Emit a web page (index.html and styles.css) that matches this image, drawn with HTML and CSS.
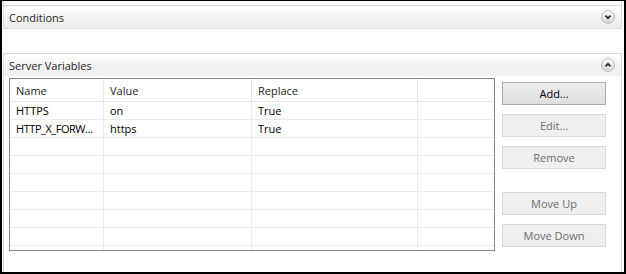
FILE: index.html
```html
<!DOCTYPE html>
<html lang="en">
<head>
  <meta charset="UTF-8">
  <title>Server Variables</title>
  <link rel="stylesheet" href="styles.css">
</head>
<body>
  <div class="frame">
    <div class="stub"></div>

    <section class="group">
      <div class="group-head">
        <span>Conditions</span>
        <svg class="toggle" width="14" height="14" viewBox="0 0 14 14">
          <defs>
            <linearGradient id="knobA" x1="0" y1="0" x2="0" y2="1">
              <stop offset="0" stop-color="#fefefe"/>
              <stop offset="1" stop-color="#d4d4d4"/>
            </linearGradient>
          </defs>
          <circle cx="7" cy="7" r="6.5" fill="url(#knobA)" stroke="#b8b8b8"/>
          <path d="M4.5 5.7 L7 8.2 L9.5 5.7" fill="none" stroke="#2d2d2d" stroke-width="1.7"/>
        </svg>
      </div>
    </section>

    <section class="group open">
      <div class="group-head">
        <span>Server Variables</span>
        <svg class="toggle" width="14" height="14" viewBox="0 0 14 14">
          <defs>
            <linearGradient id="knobB" x1="0" y1="0" x2="0" y2="1">
              <stop offset="0" stop-color="#fefefe"/>
              <stop offset="1" stop-color="#d4d4d4"/>
            </linearGradient>
          </defs>
          <circle cx="7" cy="7" r="6.5" fill="url(#knobB)" stroke="#b8b8b8"/>
          <path d="M4.5 8.3 L7 5.8 L9.5 8.3" fill="none" stroke="#2d2d2d" stroke-width="1.7"/>
        </svg>
      </div>

      <div class="group-body">
        <div class="listbox">
          <table>
            <thead>
              <tr>
                <th class="col-name">Name</th>
                <th class="col-value">Value</th>
                <th class="col-replace">Replace</th>
                <th></th>
              </tr>
            </thead>
            <tbody>
              <tr><td>HTTPS</td><td>on</td><td>True</td><td></td></tr>
              <tr><td class="clip">HTTP_X_FORW...</td><td>https</td><td>True</td><td></td></tr>
              <tr><td></td><td></td><td></td><td></td></tr>
              <tr><td></td><td></td><td></td><td></td></tr>
              <tr><td></td><td></td><td></td><td></td></tr>
              <tr><td></td><td></td><td></td><td></td></tr>
              <tr><td></td><td></td><td></td><td></td></tr>
              <tr><td></td><td></td><td></td><td></td></tr>
              <tr><td></td><td></td><td></td><td></td></tr>
            </tbody>
          </table>
        </div>

        <div class="actions">
          <button class="btn">Add...</button>
          <button class="btn" disabled>Edit...</button>
          <button class="btn" disabled>Remove</button>
          <button class="btn spaced" disabled>Move Up</button>
          <button class="btn" disabled>Move Down</button>
        </div>
      </div>
    </section>
  </div>
</body>
</html>
```

FILE: styles.css
```css
body {
  margin: 0;
  font-family: "Open Sans", "Noto Sans", sans-serif;
  font-size: 11px;
  color: #1e1e1e;
  background-color: #fff;
}

.frame {
  width: 626px;
  height: 274px;
  box-sizing: border-box;
  border: 2px solid #000;
  border-top-width: 1px;
  padding: 0 2px 0 1px;
  overflow: hidden;
  background-color: #fff;
}

.stub {
  height: 4px;
  border-left: 1px solid #dadada;
  border-right: 1px solid #dadada;
}

.group {
  border: 1px solid #dadada;
  border-bottom: none;
}

.group + .group {
  margin-top: 24px;
}

.group-head {
  height: 22px;
  display: flex;
  align-items: center;
  justify-content: space-between;
  padding: 0 6px 0 5px;
  background: linear-gradient(to bottom, #ffffff, #f6f6f6 40%, #ececec);
  border-bottom: 1px solid #dadada;
}

.open .group-head {
  border-bottom: none;
  background: linear-gradient(to bottom, #ffffff, #f5f5f5 40%, #f0f0f0);
}

.open {
  height: 220px;
}

.toggle {
  display: block;
}

.group-body {
  display: flex;
  align-items: flex-start;
  padding: 2px 0 0 5px;
}

.listbox {
  width: 486px;
  height: 173px;
  box-sizing: border-box;
  border: 1px solid #828790;
  overflow: hidden;
}

table {
  width: 100%;
  table-layout: fixed;
  border-collapse: collapse;
}

th, td {
  padding: 0 6px;
  text-align: left;
  font-weight: normal;
  white-space: nowrap;
  overflow: hidden;
  border-right: 1px solid #ececec;
  border-bottom: 1px solid #ececec;
}

th {
  height: 22px;
  border-right-color: #e6e6e6;
  border-bottom-color: #e6e6e6;
}

td {
  height: 17px;
  color: #000;
}

td.clip {
  padding-right: 0;
  letter-spacing: -0.45px;
}

th:last-child, td:last-child {
  border-right: none;
}

.col-name { width: 81px; }
.col-value { width: 135px; }
.col-replace { width: 153px; }

.actions {
  display: flex;
  flex-direction: column;
  gap: 9px;
  margin: 4px 0 0 7px;
}

.btn {
  width: 104px;
  height: 23px;
  padding: 0;
  font-family: inherit;
  font-size: 11px;
  color: #000;
  border: 1px solid #acacac;
  background: linear-gradient(to bottom, #ececec, #dfdfdf);
}

.btn:disabled {
  color: #6d6d6d;
  border-color: #d9d9d9;
  background: #efefef;
}

.spaced {
  margin-top: 14px;
}
```
